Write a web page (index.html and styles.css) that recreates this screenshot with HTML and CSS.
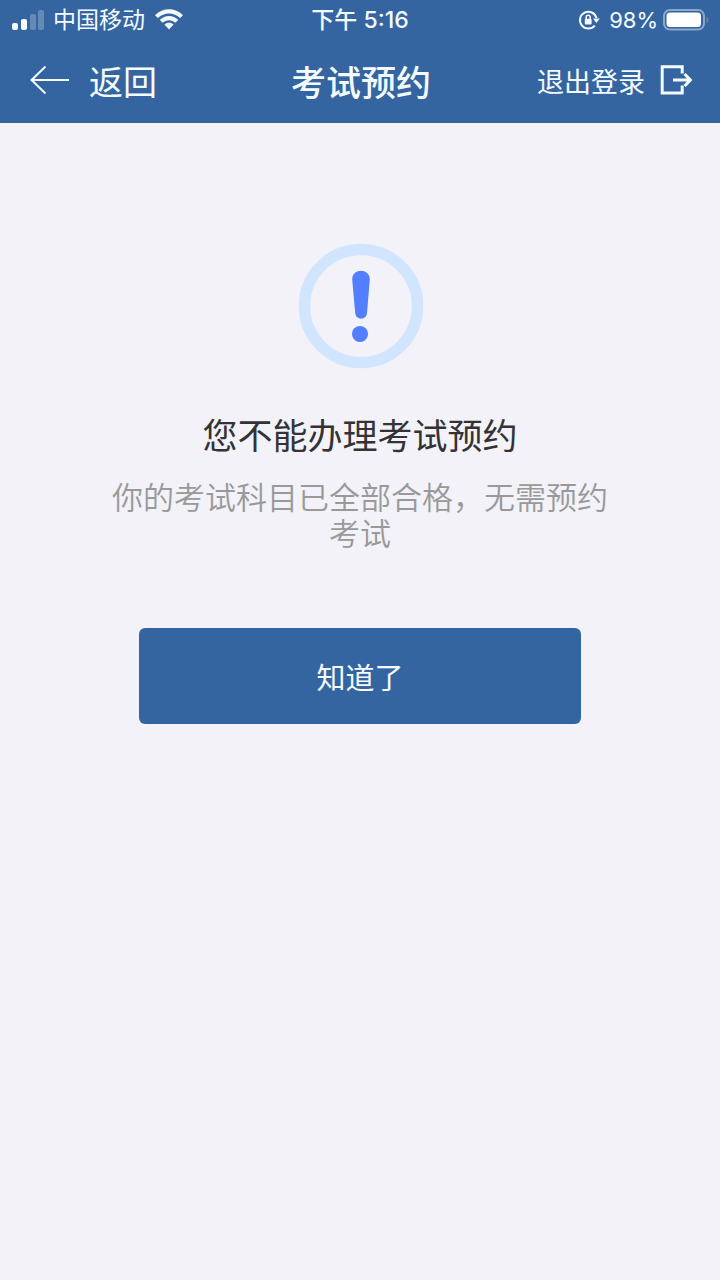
FILE: index.html
```html
<!DOCTYPE html>
<html lang="zh-CN">
<head>
<meta charset="utf-8">
<meta name="viewport" content="width=device-width, initial-scale=1">
<title>考试预约</title>
<link rel="stylesheet" href="styles.css">
</head>
<body>
<header class="top">
  <div class="status">
    <div class="status-side">
      <svg class="signal" width="34" height="22" viewBox="0 0 34 22" aria-hidden="true">
        <rect x="1" y="14" width="6" height="7" rx="2"/>
        <rect x="10" y="10" width="6" height="11" rx="2"/>
        <rect class="dim" x="19" y="5" width="6" height="16" rx="2"/>
        <rect class="dim" x="27" y="1" width="6" height="20" rx="2"/>
      </svg>
      <span>中国移动</span>
      <svg class="wifi" width="30" height="22" viewBox="0 0 30 22" aria-hidden="true">
        <path d="M1 6.2C9 -1.6 21 -1.6 29 6.2L26.1 9.1C19.8 3 10.2 3 3.9 9.1Z"/>
        <path d="M5.8 10.9C11 5.8 19 5.8 24.2 10.9L21.3 13.8C17.8 10.4 12.2 10.4 8.7 13.8Z"/>
        <path d="M10.4 15.6C13 13.1 17 13.1 19.6 15.6L15 20.4Z"/>
      </svg>
    </div>
    <time class="clock" datetime="17:16">下午 5:16</time>
    <div class="status-side status-end">
      <svg class="lock" width="22" height="22" viewBox="0 0 22 22" aria-hidden="true">
        <path class="ring" d="M16.8 16.6A8.4 8.4 0 1 1 18.5 9"/>
        <path d="M15 9.5H21.8L18.4 14Z"/>
        <rect x="6.8" y="9.8" width="6.8" height="5.6" rx="1"/>
        <path class="shackle" d="M8.2 10V8.2a2 2 0 0 1 4 0V10"/>
      </svg>
      <span class="percent">98%</span>
      <svg class="battery" width="47" height="22" viewBox="0 0 47 22" aria-hidden="true">
        <rect class="shell" x="2" y="1" width="40" height="19.6" rx="6"/>
        <rect class="charge" x="4.5" y="3.5" width="34.5" height="14.6" rx="3.5"/>
        <path class="dim" d="M44.5 7.5q2 1 2 3.5t-2 3.5Z"/>
      </svg>
    </div>
  </div>
  <nav class="nav">
    <a class="back" href="#">
      <svg width="40" height="30" viewBox="0 0 40 30" aria-hidden="true"><path d="M15.5 1.5L1.5 15L15.5 28.5M1.5 15H39"/></svg>
      <span>返回</span>
    </a>
    <h1 class="title">考试预约</h1>
    <a class="logout" href="#">
      <span>退出登录</span>
      <svg width="32" height="30" viewBox="0 0 32 30" aria-hidden="true"><path d="M22.2 8.5V1.8H2.2V28H22.2V20.5M13 15H30M24.6 9L30.4 15L24.6 21"/></svg>
    </a>
  </nav>
</header>
<main class="notice">
  <svg class="alert" width="126" height="126" viewBox="0 0 126 126" aria-hidden="true">
    <circle class="alert-ring" cx="64" cy="63" r="56.5"/>
    <path d="M55.2 36.5C55 24.8 73 24.8 72.8 36.5L70 70C69.4 77.5 58.8 77.5 58.2 70Z"/>
    <circle cx="63" cy="91" r="8"/>
  </svg>
  <h2 class="heading">您不能办理考试预约</h2>
  <p class="detail">你的考试科目已全部合格，无需预约考试</p>
  <button class="confirm" type="button">知道了</button>
</main>
</body>
</html>
```
FILE: styles.css
```css
* {
  box-sizing: border-box;
}

body {
  margin: 0;
  min-height: 100vh;
  background: #f2f2f8;
  color: #333336;
  font-family: Inter, "Noto Sans CJK SC", sans-serif;
}

svg {
  display: block;
  flex: none;
  fill: currentColor;
}

.top {
  background: #3565a0;
  color: #f4fbff;
}

.status,
.nav {
  display: grid;
  grid-template-columns: 1fr auto 1fr;
  align-items: center;
}

.status {
  height: 40px;
  padding: 0 11px;
  font-size: 23px;
  line-height: 40px;
}

.status-side {
  display: flex;
  align-items: center;
  gap: 8px;
}

.status-end {
  justify-content: flex-end;
  gap: 4px;
}

.wifi {
  margin-left: 1px;
}

.clock {
  font-weight: 500;
}

.percent {
  margin-left: 5px;
  font-size: 22px;
}

.charge {
  fill: #fff;
}

.dim {
  opacity: 0.25;
}

.ring,
.shackle {
  fill: none;
  stroke: currentColor;
  stroke-width: 2;
}

.shackle {
  stroke-width: 1.5;
}

.shell {
  fill: none;
  stroke: currentColor;
  stroke-width: 2;
  opacity: 0.45;
}

.nav {
  height: 83px;
  padding: 0 28px 3px 30px;
}

.back,
.logout {
  display: flex;
  align-items: center;
  color: inherit;
  text-decoration: none;
}

.back {
  gap: 19px;
  font-size: 34px;
}

.logout {
  justify-content: flex-end;
  gap: 15px;
  font-size: 27px;
}

.back svg,
.logout svg {
  fill: none;
  stroke: currentColor;
  stroke-width: 2;
}

.logout svg {
  stroke-width: 3;
}

.title {
  margin: 0;
  font-size: 35px;
  font-weight: 500;
}

.notice {
  display: flex;
  flex-direction: column;
  align-items: center;
  padding: 120px 104px 40px;
  text-align: center;
}

.alert {
  color: #537eff;
}

.alert-ring {
  fill: none;
  stroke: #d2e5ff;
  stroke-width: 11.5;
}

.heading {
  margin: 41px 0 0;
  font-size: 35px;
  font-weight: 400;
  line-height: 52px;
}

.detail {
  margin: 18px 0 0;
  color: #999;
  font-size: 31px;
  font-weight: 350;
  line-height: 36px;
}

.confirm {
  width: 100%;
  max-width: 442px;
  height: 96px;
  margin-top: 76px;
  border: 0;
  border-radius: 6px;
  background: #3565a0;
  color: #f4fbff;
  font-family: inherit;
  font-size: 29px;
}
```
